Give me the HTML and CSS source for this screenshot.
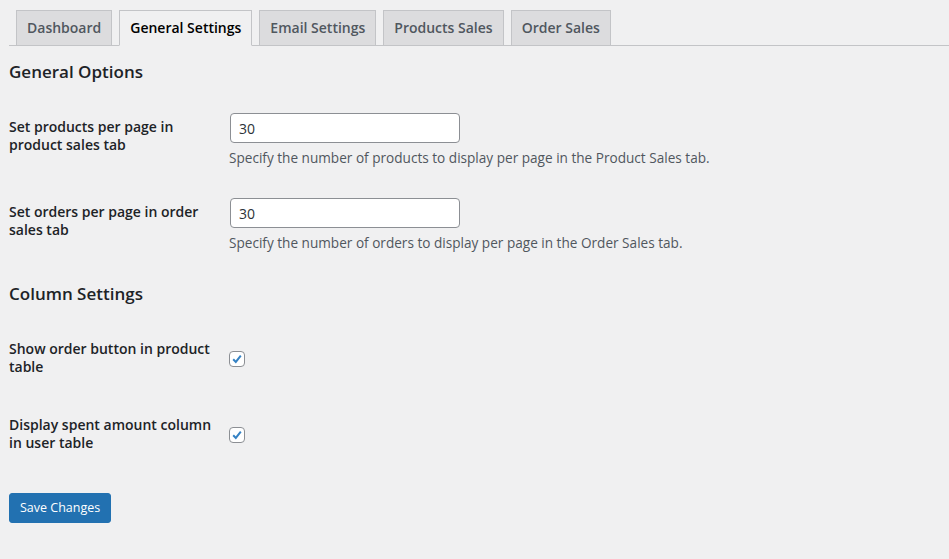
FILE: index.html
```html
<!DOCTYPE html>
<html>
<head>
<meta charset="utf-8">
<link rel="stylesheet" href="styles.css">
</head>
<body>
<div class="wrap">
  <nav class="nav-tab-wrapper">
    <a class="nav-tab">Dashboard</a>
    <a class="nav-tab nav-tab-active">General Settings</a>
    <a class="nav-tab">Email Settings</a>
    <a class="nav-tab">Products Sales</a>
    <a class="nav-tab">Order Sales</a>
  </nav>

  <h2 class="section-title">General Options</h2>
  <div class="form-table">
    <div class="row">
      <div class="th">Set products per page in product sales tab</div>
      <div class="td">
        <input class="text-input" type="text" value="30">
        <p class="description">Specify the number of products to display per page in the Product Sales tab.</p>
      </div>
    </div>
    <div class="row">
      <div class="th">Set orders per page in order sales tab</div>
      <div class="td">
        <input class="text-input" type="text" value="30">
        <p class="description">Specify the number of orders to display per page in the Order Sales tab.</p>
      </div>
    </div>
  </div>

  <h2 class="section-title">Column Settings</h2>
  <div class="form-table">
    <div class="row">
      <div class="th">Show order button in product table</div>
      <div class="td td-check">
        <span class="checkbox"><svg viewBox="0 0 16 16" width="16" height="16"><path d="M4.2 8.3 L6.8 10.9 L11.8 4.6" fill="none" stroke="#3582c4" stroke-width="2"/></svg></span>
      </div>
    </div>
    <div class="row">
      <div class="th">Display spent amount column in user table</div>
      <div class="td td-check">
        <span class="checkbox"><svg viewBox="0 0 16 16" width="16" height="16"><path d="M4.2 8.3 L6.8 10.9 L11.8 4.6" fill="none" stroke="#3582c4" stroke-width="2"/></svg></span>
      </div>
    </div>
  </div>

  <div class="submit">
    <button class="button-primary">Save Changes</button>
  </div>
</div>
</body>
</html>
```

FILE: styles.css
```css
* { box-sizing: border-box; }
html, body {
  margin: 0;
  background: #f0f0f1;
  color: #1d2327;
  font-family: "Open Sans", "Noto Sans", sans-serif;
  font-size: 14px;
}
.wrap {
  padding: 10px 0 0 9px;
}
.nav-tab-wrapper {
  display: flex;
  border-bottom: 1px solid #c3c4c7;
}
.nav-tab {
  margin-left: 7px;
  margin-bottom: -1px;
  padding: 5px 10px;
  font-size: 14px;
  line-height: 24px;
  font-weight: 600;
  background: #dcdcde;
  color: #50575e;
  border: 1px solid #c3c4c7;
  white-space: nowrap;
}
.nav-tab-active {
  background: #f0f0f1;
  color: #000;
  border-bottom-color: #f0f0f1;
}
.section-title {
  font-size: 17px;
  font-weight: 600;
  margin: 15px 0 0;
  line-height: 22px;
  color: #1d2327;
}
.form-table {
  margin-top: 15px;
}
.row {
  display: flex;
}
.th {
  width: 221px;
  padding: 20px 10px 20px 0;
  font-weight: 600;
  line-height: 18px;
  flex: none;
}
.td {
  padding: 15px 10px 16px 0;
  line-height: 18px;
}
.text-input {
  display: block;
  width: 230px;
  height: 30px;
  padding: 0 8px;
  border: 1px solid #8c8f94;
  border-radius: 4px;
  background: #fff;
  color: #2c3338;
  font-family: inherit;
  font-size: 14px;
  margin: 0;
}
.description {
  margin: 6px 0 0 -1px;
  color: #50575e;
  font-size: 13.6px;
  line-height: 18px;
}
.td-check {
  padding-top: 31px;
}
.checkbox {
  display: block;
  width: 16px;
  height: 16px;
  margin-left: -1px;
  border: 1px solid #8c8f94;
  border-radius: 4px;
  background: #fff;
  position: relative;
}
.checkbox svg {
  position: absolute;
  left: -1px;
  top: -1px;
}
.submit {
  padding: 21px 0;
}
.button-primary {
  background: #2271b1;
  border: 1px solid #2271b1;
  color: #fff;
  border-radius: 3px;
  height: 30px;
  padding: 0 10px;
  font-family: inherit;
  font-size: 12.5px;
  line-height: 28px;
}
```
